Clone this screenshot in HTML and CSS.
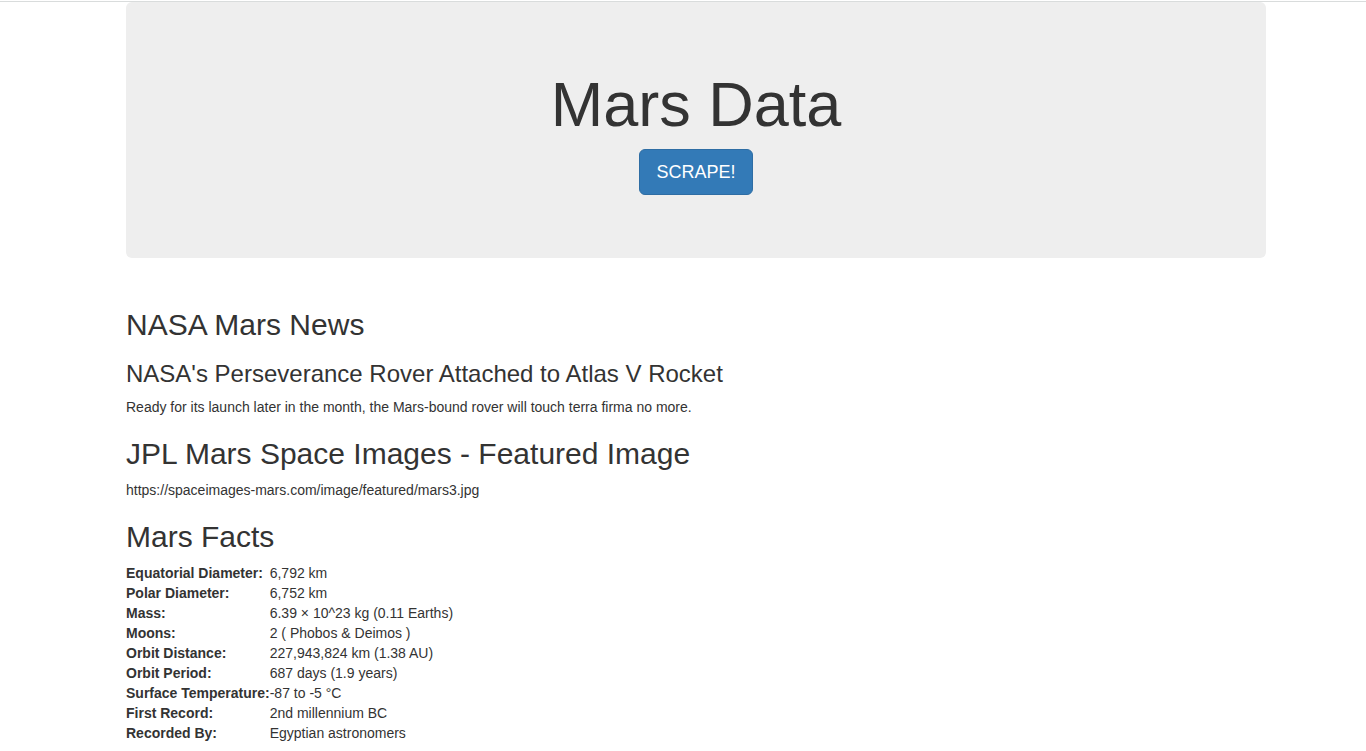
FILE: index.html
```html
<!DOCTYPE html>
<html lang="en">
<head>
<meta charset="utf-8">
<title>Mars Data</title>
<link rel="stylesheet" href="styles.css">
</head>
<body>
<main class="container">
  <header class="jumbotron">
    <h1 class="jumbotron-title">Mars Data</h1>
    <button class="btn" type="button">SCRAPE!</button>
  </header>
  <section>
    <h2 class="heading">NASA Mars News</h2>
    <h3 class="subheading">NASA's Perseverance Rover Attached to Atlas V Rocket</h3>
    <p class="text">Ready for its launch later in the month, the Mars-bound rover will touch terra firma no more.</p>
  </section>
  <section>
    <h2 class="heading">JPL Mars Space Images - Featured Image</h2>
    <p class="text">https://spaceimages-mars.com/image/featured/mars3.jpg</p>
  </section>
  <section>
    <h2 class="heading">Mars Facts</h2>
    <table class="facts">
      <tbody>
        <tr><th scope="row">Equatorial Diameter:</th><td>6,792 km</td></tr>
        <tr><th scope="row">Polar Diameter:</th><td>6,752 km</td></tr>
        <tr><th scope="row">Mass:</th><td>6.39 × 10^23 kg (0.11 Earths)</td></tr>
        <tr><th scope="row">Moons:</th><td>2 ( Phobos &amp; Deimos )</td></tr>
        <tr><th scope="row">Orbit Distance:</th><td>227,943,824 km (1.38 AU)</td></tr>
        <tr><th scope="row">Orbit Period:</th><td>687 days (1.9 years)</td></tr>
        <tr><th scope="row">Surface Temperature:</th><td>-87 to -5 °C</td></tr>
        <tr><th scope="row">First Record:</th><td>2nd millennium BC</td></tr>
        <tr><th scope="row">Recorded By:</th><td>Egyptian astronomers</td></tr>
      </tbody>
    </table>
  </section>
</main>
</body>
</html>
```

FILE: styles.css
```css
* {
  box-sizing: border-box;
}

body {
  margin: 1px 0 0;
  border-top: 1px solid #d9dcdc;
  background: #fff;
  color: #333;
  font-family: "Liberation Sans", Arial, sans-serif;
  font-size: 14px;
  line-height: 20px;
}

.container {
  max-width: 1170px;
  margin: 0 auto;
  padding: 0 2px 0 28px;
}

.jumbotron {
  margin-bottom: 50px;
  padding: 48px 60px 63px;
  border-radius: 6px;
  background: #eee;
  text-align: center;
}

.jumbotron-title {
  margin: 20px 0 10px;
  font-size: 63px;
  font-weight: 500;
  line-height: 69px;
}

.btn {
  padding: 10px 16px;
  border: 1px solid #2e6da4;
  border-radius: 6px;
  background: #337ab7;
  color: #fff;
  font-family: inherit;
  font-size: 18px;
  line-height: 24px;
  cursor: pointer;
}

.heading,
.subheading {
  margin: 20px 0 10px;
  font-weight: 500;
}

.heading {
  font-size: 30px;
  line-height: 33px;
}

.subheading {
  font-size: 24px;
  line-height: 26px;
}

.text {
  margin: 0 0 10px;
}

.facts {
  border-collapse: collapse;
}

.facts th,
.facts td {
  padding: 0;
  text-align: left;
}
```
